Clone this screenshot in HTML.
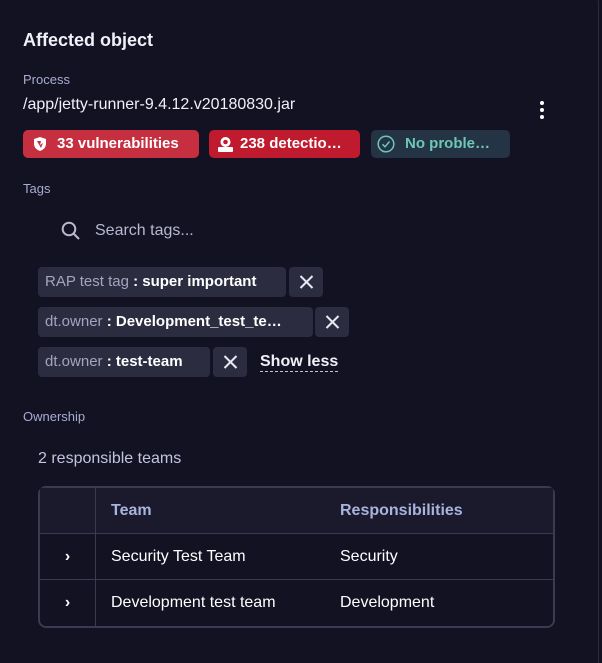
<!DOCTYPE html>
<html style="overflow:hidden;height:663px"><head><style>
*{margin:0;padding:0;box-sizing:border-box}
body{width:602px;height:663px;background:#121222;font-family:"Liberation Sans",sans-serif;position:relative;overflow:hidden;color:#f0f0f8}
.card{position:absolute;left:-10px;top:-10px;width:609px;height:700px;border:1px solid #2a2a40;border-radius:14px;background:#121223}
.a{position:absolute;white-space:nowrap}
.lbl{font-size:13px;color:#a8acd0}
.badge{position:absolute;top:130px;height:28px;border-radius:5px;font-size:15px;font-weight:bold;line-height:28px;color:#fff}
.chip{position:absolute;height:30px;background:#2c2c40;border-radius:4px;font-size:15px;line-height:30px;padding-left:7px}
.chip .k{color:#a4a4c0}.chip .v{color:#fff;font-weight:bold}
.x{position:absolute;height:30px;width:34px;background:#2c2c40;border-radius:4px}
.x:before,.x:after{content:"";position:absolute;left:9px;top:14px;width:17px;height:2px;background:#e8e8f0;transform:rotate(45deg)}
.x:after{transform:rotate(-45deg)}
table{position:absolute;left:38px;top:486px;width:517px;border-collapse:separate;border-spacing:0;border:2px solid #3a3a50;border-radius:8px;font-size:16px}
td{height:46px;border-bottom:1.5px solid #3a3a50;padding-left:15px;color:#fff}
tr:last-child td{border-bottom:none}
td:first-child{width:56px;border-right:1.5px solid #3a3a50;padding-left:0;text-align:center;font-weight:bold}
tr.h td{background:#1a1a2c;color:#a8b4dc;font-weight:bold}
</style></head><body>
<div class="card"></div>
<div class="a" style="left:23px;top:30px;font-size:18px;font-weight:bold">Affected object</div>
<div class="a lbl" style="left:23px;top:72px">Process</div>
<div class="a" style="left:23px;top:96px;font-size:16px">/app/jetty-runner-9.4.12.v20180830.jar</div>
<div class="a" style="left:540px;top:101px;width:4px">
<div style="width:4px;height:4px;border-radius:2px;background:#fff;margin-bottom:3px"></div>
<div style="width:4px;height:4px;border-radius:2px;background:#fff;margin-bottom:3px"></div>
<div style="width:4px;height:4px;border-radius:2px;background:#fff"></div></div>
<div class="badge" style="left:23px;width:176px;background:#c52f40">
<svg style="position:absolute;left:9px;top:6px" width="16" height="16" viewBox="0 0 16 16"><path d="M8 1L14 3V8C14 11.5 11 14 8 15C5 14 2 11.5 2 8V3Z" fill="#fff"/><path d="M5 5L9 5L8 9L11 7L9 12Z" fill="#c52f40"/></svg>
<span style="position:absolute;left:34px">33 vulnerabilities</span></div>
<div class="badge" style="left:209px;width:151px;background:#c01a2f">
<svg style="position:absolute;left:8px;top:6px" width="17" height="16" viewBox="0 0 17 16"><circle cx="8.5" cy="6" r="5" fill="#fff"/><circle cx="8.5" cy="6" r="2.3" fill="#c01a2f"/><rect x="1" y="11" width="15" height="5" rx="1" fill="#fff"/></svg>
<span style="position:absolute;left:31px">238 detectio…</span></div>
<div class="badge" style="left:371px;width:139px;background:#253444;color:#6cc8b6">
<svg style="position:absolute;left:6px;top:5px" width="18" height="18" viewBox="0 0 18 18"><circle cx="9" cy="9" r="7.8" fill="none" stroke="#6cc8b6" stroke-width="1.5"/><path d="M5.5 9.3L8 11.8L12.5 6.5" fill="none" stroke="#6cc8b6" stroke-width="1.5"/></svg>
<span style="position:absolute;left:34px">No proble…</span></div>
<div class="a lbl" style="left:23px;top:181px">Tags</div>
<svg class="a" style="left:61px;top:221px" width="20" height="20" viewBox="0 0 20 20"><circle cx="8" cy="8" r="6.3" fill="none" stroke="#b8b8d0" stroke-width="2"/><path d="M12.5 12.5L18 18" stroke="#b8b8d0" stroke-width="2"/></svg>
<div class="a" style="left:95px;top:222px;font-size:16px;color:#b8b8d0">Search tags...</div>
<div class="chip" style="left:38px;top:267px;width:248px"><span class="k">RAP test tag</span><span class="v"> : super important</span></div>
<div class="x" style="left:289px;top:267px"></div>
<div class="chip" style="left:38px;top:307px;width:275px"><span class="k">dt.owner</span><span class="v"> : Development_test_te…</span></div>
<div class="x" style="left:315px;top:307px"></div>
<div class="chip" style="left:38px;top:347px;width:172px"><span class="k">dt.owner</span><span class="v"> : test-team</span></div>
<div class="x" style="left:213px;top:347px"></div>
<div class="a" style="left:260px;top:352px;font-size:16px;font-weight:bold;border-bottom:1px dashed #c0c0d8;line-height:19px">Show less</div>
<div class="a lbl" style="left:23px;top:409px">Ownership</div>
<div class="a" style="left:38px;top:450px;font-size:16px;color:#c4c4e0">2 responsible teams</div>
<table>
<tr class="h"><td></td><td style="width:229px">Team</td><td>Responsibilities</td></tr>
<tr><td>›</td><td>Security Test Team</td><td>Security</td></tr>
<tr><td>›</td><td>Development test team</td><td>Development</td></tr>
</table>
</body></html>
